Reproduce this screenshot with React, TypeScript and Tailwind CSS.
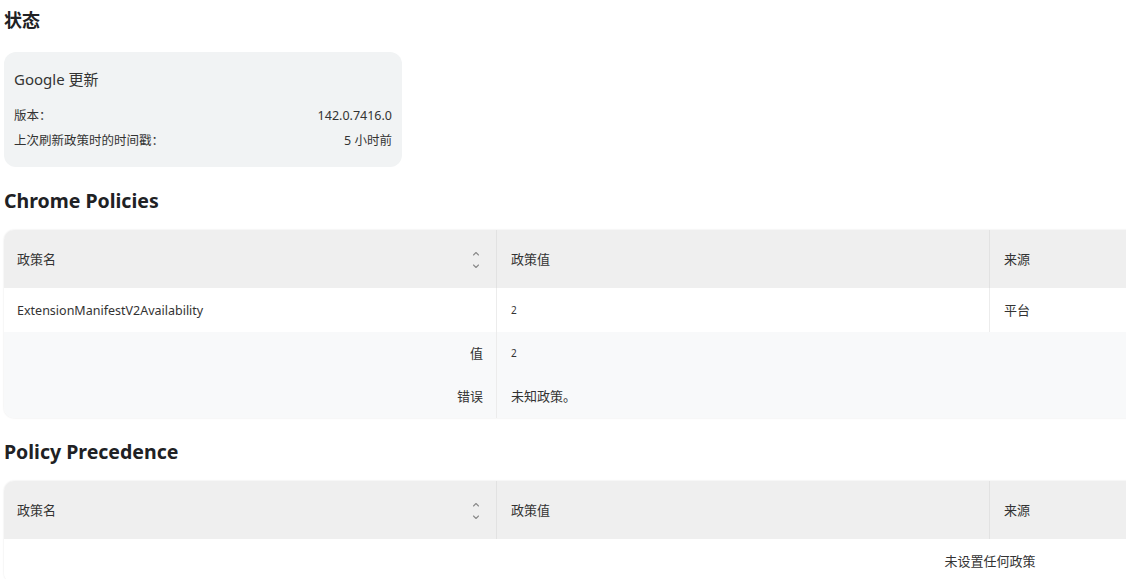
import React from "react";

function SortIcon() {
  return (
    <svg width="10" height="22" viewBox="0 0 10 22" className="shrink-0">
      <path d="M2.5 6 L5 3.5 L7.5 6" fill="none" stroke="#8a8a8a" strokeWidth="1.1" strokeLinecap="round" strokeLinejoin="round" />
      <path d="M2.5 16 L5 18.5 L7.5 16" fill="none" stroke="#8a8a8a" strokeWidth="1.1" strokeLinecap="round" strokeLinejoin="round" />
    </svg>
  );
}

function Header() {
  return (
    <div className="grid grid-cols-[493px_493px_493px_493px] h-[58px] bg-[#efefef] text-[13px] text-[#333]">
      <div className="flex items-center justify-between pl-[13px] pr-[15px] pt-[2px] border-r border-[#e2e2e2]">
        <span>政策名</span>
        <SortIcon />
      </div>
      <div className="flex items-center pl-[14px] pt-[2px] border-r border-[#e2e2e2]">政策值</div>
      <div className="flex items-center pl-[14px] pt-[2px] border-r border-[#e2e2e2]">来源</div>
      <div className="flex items-center pl-[14px]"></div>
    </div>
  );
}

export default function App() {
  return (
    <div className="w-[1126px] h-[579px] overflow-hidden bg-white pl-[4px] font-['Noto_Sans','Noto_Sans_CJK_SC',sans-serif] text-[#202124]">
      <div className="h-[40px] flex items-center">
        <h2 className="text-[18px] font-bold leading-none">状态</h2>
      </div>
      <div className="mt-[12px] w-[398px] h-[115px] rounded-[12px] bg-[#f1f3f4] px-[10px] pt-[16px] text-[#333]">
        <div className="h-[22px] flex items-center text-[15px]">Google 更新</div>
        <div className="mt-[14px] h-[25px] flex items-center justify-between text-[12.5px]">
          <span>版本：</span>
          <span>142.0.7416.0</span>
        </div>
        <div className="h-[25px] flex items-center justify-between text-[12.5px]">
          <span>上次刷新政策时的时间戳：</span>
          <span>5 小时前</span>
        </div>
      </div>

      <div className="h-[63px] flex items-center pt-[4px]">
        <h2 className="text-[19.5px] font-bold leading-none">Chrome Policies</h2>
      </div>

      <div className="w-[1972px] rounded-[10px] overflow-hidden shadow-[0_0_2px_rgba(0,0,0,0.12)]">
        <Header />
        <div className="grid grid-cols-[493px_493px_493px_493px] h-[44px] bg-white text-[#333]">
          <div className="flex items-center pl-[13px] pt-[2px] text-[12.5px] border-r border-[#ececec]">ExtensionManifestV2Availability</div>
          <div className="flex items-center pl-[14px] text-[10px] border-r border-[#ececec]">2</div>
          <div className="flex items-center pl-[14px] pt-[2px] text-[13px] border-r border-[#ececec]">平台</div>
          <div className="flex items-center pl-[14px] text-[13px]"></div>
        </div>
        <div className="grid grid-cols-[493px_1479px] bg-[#f8f9fa] text-[#333]">
          <div className="h-[43px] flex items-center justify-end pr-[13px] text-[13px] border-r border-[#ececec]">值</div>
          <div className="h-[43px] flex items-center pl-[14px] text-[10px]">2</div>
          <div className="h-[43px] flex items-center justify-end pr-[13px] text-[13px] border-r border-[#ececec]">错误</div>
          <div className="h-[43px] flex items-center pl-[14px] text-[13px]">未知政策。</div>
        </div>
      </div>

      <div className="h-[63px] flex items-center pt-[4px]">
        <h2 className="text-[19.5px] font-bold leading-none">Policy Precedence</h2>
      </div>

      <div className="w-[1972px] rounded-[10px] overflow-hidden shadow-[0_0_2px_rgba(0,0,0,0.12)]">
        <Header />
        <div className="h-[44px] flex items-center justify-center pt-[2px] bg-white text-[13px] text-[#333]">未设置任何政策</div>
      </div>
    </div>
  );
}
